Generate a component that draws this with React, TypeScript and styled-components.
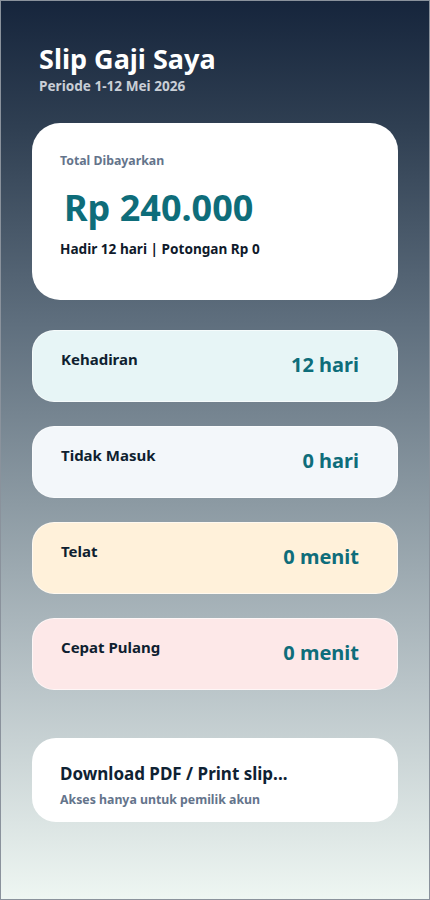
import React from "react";
import styled, { createGlobalStyle } from "styled-components";

const GlobalStyle = createGlobalStyle`
  html, body {
    margin: 0;
    padding: 0;
  }
  body {
    font-family: "Noto Sans", "Open Sans", sans-serif;
  }
`;

interface StatItf {
  label: string;
  value: string;
  bg: string;
}

const stats: StatItf[] = [
  { label: "Kehadiran", value: "12 hari", bg: "#e7f5f6" },
  { label: "Tidak Masuk", value: "0 hari", bg: "#f3f7fa" },
  { label: "Telat", value: "0 menit", bg: "#fff1da" },
  { label: "Cepat Pulang", value: "0 menit", bg: "#fde8e8" },
];

const App = () => {
  return (
    <Page>
      <GlobalStyle />
      <Header>
        <Title>Slip Gaji Saya</Title>
        <Period>Periode 1-12 Mei 2026</Period>
      </Header>

      <TotalCard>
        <SmallLabel>Total Dibayarkan</SmallLabel>
        <Amount>Rp 240.000</Amount>
        <Summary>Hadir 12 hari | Potongan Rp 0</Summary>
      </TotalCard>

      <StatList>
        {stats.map((s) => (
          <StatCard key={s.label} bg={s.bg}>
            <StatLabel>{s.label}</StatLabel>
            <StatValue>{s.value}</StatValue>
          </StatCard>
        ))}
      </StatList>

      <DownloadCard>
        <DownloadTitle>Download PDF / Print slip...</DownloadTitle>
        <SmallLabel>Akses hanya untuk pemilik akun</SmallLabel>
      </DownloadCard>
    </Page>
  );
};

export default App;

const Page = styled.div`
  box-sizing: border-box;
  width: 430px;
  height: 900px;
  overflow: hidden;
  border: 1px solid #8a929c;
  background: linear-gradient(180deg, #16253c 0%, #2f3f52 14%, #5f6f7e 36%, #8c9aa3 56%, #b9c4c8 76%, #eef6f2 100%);
  padding: 0 31px;
`;

const Header = styled.div`
  padding: 41px 0 0 7px;
  display: flex;
  flex-direction: column;
`;

const Title = styled.h1`
  margin: 0;
  color: #ffffff;
  font-size: 27px;
  font-weight: 700;
  line-height: 34px;
`;

const Period = styled.div`
  margin-top: 1px;
  color: #c9ced6;
  font-size: 13.6px;
  font-weight: 700;
  line-height: 18px;
`;

const TotalCard = styled.div`
  margin-top: 28px;
  height: 177px;
  box-sizing: border-box;
  background: #ffffff;
  border-radius: 28px;
  padding: 29px 28px 0;
  display: flex;
  flex-direction: column;
`;

const SmallLabel = styled.div`
  color: #64748b;
  font-size: 12.3px;
  font-weight: 700;
  line-height: 18px;
`;

const Amount = styled.div`
  margin: 15px 0 0 4px;
  color: #0e6d7a;
  font-size: 36px;
  font-weight: 700;
  line-height: 46px;
`;

const Summary = styled.div`
  margin-top: 9px;
  color: #0f1a2b;
  font-size: 13.6px;
  font-weight: 700;
  line-height: 18px;
`;

const StatList = styled.div`
  margin-top: 30px;
  display: flex;
  flex-direction: column;
  gap: 24px;
`;

const StatCard = styled.div<{ bg: string }>`
  height: 72px;
  box-sizing: border-box;
  background: ${({ bg }) => bg};
  border: 1px solid rgba(255, 255, 255, 0.6);
  border-radius: 22px;
  padding: 18px 38px 0 28px;
  display: flex;
  justify-content: space-between;
  align-items: flex-start;
`;

const StatLabel = styled.div`
  color: #0f1f30;
  font-size: 15px;
  font-weight: 700;
  line-height: 20px;
`;

const StatValue = styled.div`
  margin-top: 3px;
  color: #0e6d7a;
  font-size: 20px;
  font-weight: 700;
  line-height: 26px;
`;

const DownloadCard = styled.div`
  margin-top: 48px;
  height: 84px;
  box-sizing: border-box;
  background: #ffffff;
  border-radius: 24px;
  padding: 25px 28px 0;
  display: flex;
  flex-direction: column;
  gap: 6px;
`;

const DownloadTitle = styled.div`
  color: #0f2233;
  font-size: 17px;
  font-weight: 700;
  line-height: 22px;
`;
